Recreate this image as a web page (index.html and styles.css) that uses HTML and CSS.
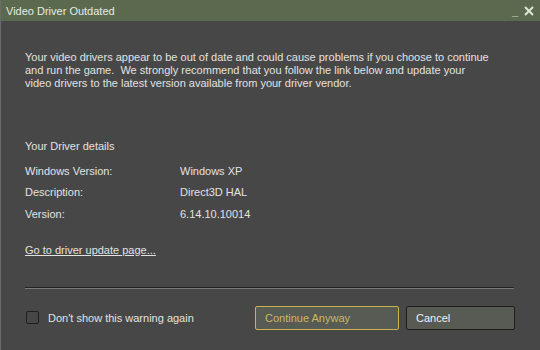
FILE: index.html
```html
<!DOCTYPE html>
<html lang="en">
<head>
    <meta charset="UTF-8">
    <title>Video Driver Outdated</title>
    <link rel="stylesheet" href="styles.css">
</head>
<body>
    <div class="window">
        <div class="title-bar">
            <div class="title">Video Driver Outdated</div>
            <div class="title-controls">
                <span class="minimize">_</span>
                <span class="close">
                    <svg width="10" height="10" viewBox="0 0 10 10">
                        <path d="M1 1 L9 9 M9 1 L1 9" stroke="#dfe6d8" stroke-width="2"/>
                    </svg>
                </span>
            </div>
        </div>
        <div class="content">
            <p class="message">
                Your video drivers appear to be out of date and could cause problems if you choose to continue<br>
                and run the game.&nbsp; We strongly recommend that you follow the link below and update your<br>
                video drivers to the latest version available from your driver vendor.
            </p>
            <div class="details">
                <div class="details-title">Your Driver details</div>
                <div class="row"><span class="key">Windows Version:</span><span>Windows XP</span></div>
                <div class="row"><span class="key">Description:</span><span>Direct3D HAL</span></div>
                <div class="row"><span class="key">Version:</span><span>6.14.10.10014</span></div>
            </div>
            <a class="link" href="#">Go to driver update page...</a>
        </div>
        <div class="separator"></div>
        <div class="footer">
            <label class="check">
                <span class="box"></span>
                Don't show this warning again
            </label>
            <div class="buttons">
                <button class="btn primary">Continue Anyway</button>
                <button class="btn cancel">Cancel</button>
            </div>
        </div>
    </div>
</body>
</html>
```

FILE: styles.css
```css
body {
    margin: 0;
    font-family: "Liberation Sans", Arial, sans-serif;
    font-size: 11px;
    color: #e2e2e2;
    background-color: #474747;
}
.window {
    width: 540px;
    height: 350px;
    background-color: #474747;
    border-left: 1px solid #6b6b6b;
    box-sizing: border-box;
    display: flex;
    flex-direction: column;
}
.title-bar {
    height: 21px;
    background-color: #5b6a4e;
    display: flex;
    align-items: center;
    justify-content: space-between;
    padding: 0 6px 0 5px;
}
.title {
    font-size: 11px;
    color: #e6ebe1;
}
.title-controls {
    display: flex;
    align-items: flex-end;
    gap: 6px;
    color: #dfe6d8;
}
.minimize {
    font-weight: bold;
    font-size: 11px;
    line-height: 10px;
}
.close svg {
    display: block;
}
.content {
    padding: 0 24px;
}
.message {
    margin: 30px 0 0;
    line-height: 13px;
    white-space: nowrap;
}
.details {
    margin-top: 50px;
}
.details-title {
    height: 13px;
    margin-bottom: 7px;
}
.row {
    display: flex;
    height: 21.5px;
    align-items: center;
}
.key {
    width: 155px;
}
.link {
    display: inline-block;
    margin-top: 19px;
    color: #e2e2e2;
    text-decoration: underline;
}
.separator {
    margin: 31px 26px 0 24px;
    border-top: 1px solid #222;
    border-bottom: 1px solid #7a7a7a;
}
.footer {
    display: flex;
    align-items: center;
    justify-content: space-between;
    margin-top: 17px;
    padding: 0 25px 0 25px;
}
.check {
    display: flex;
    align-items: center;
    gap: 9px;
}
.box {
    width: 11px;
    height: 11px;
    border: 1px solid #1e1e1e;
    border-radius: 2px;
}
.buttons {
    display: flex;
    gap: 7px;
}
.btn {
    height: 24px;
    background-color: #585a54;
    font-family: inherit;
    font-size: 11px;
    text-align: left;
    padding: 0 9px;
    border-radius: 2px;
}
.btn.primary {
    width: 144px;
    border: 1px solid #c9b450;
    color: #cbb95c;
}
.btn.cancel {
    width: 109px;
    border: 1px solid #1e1e1e;
    color: #f2f2f2;
}
```
